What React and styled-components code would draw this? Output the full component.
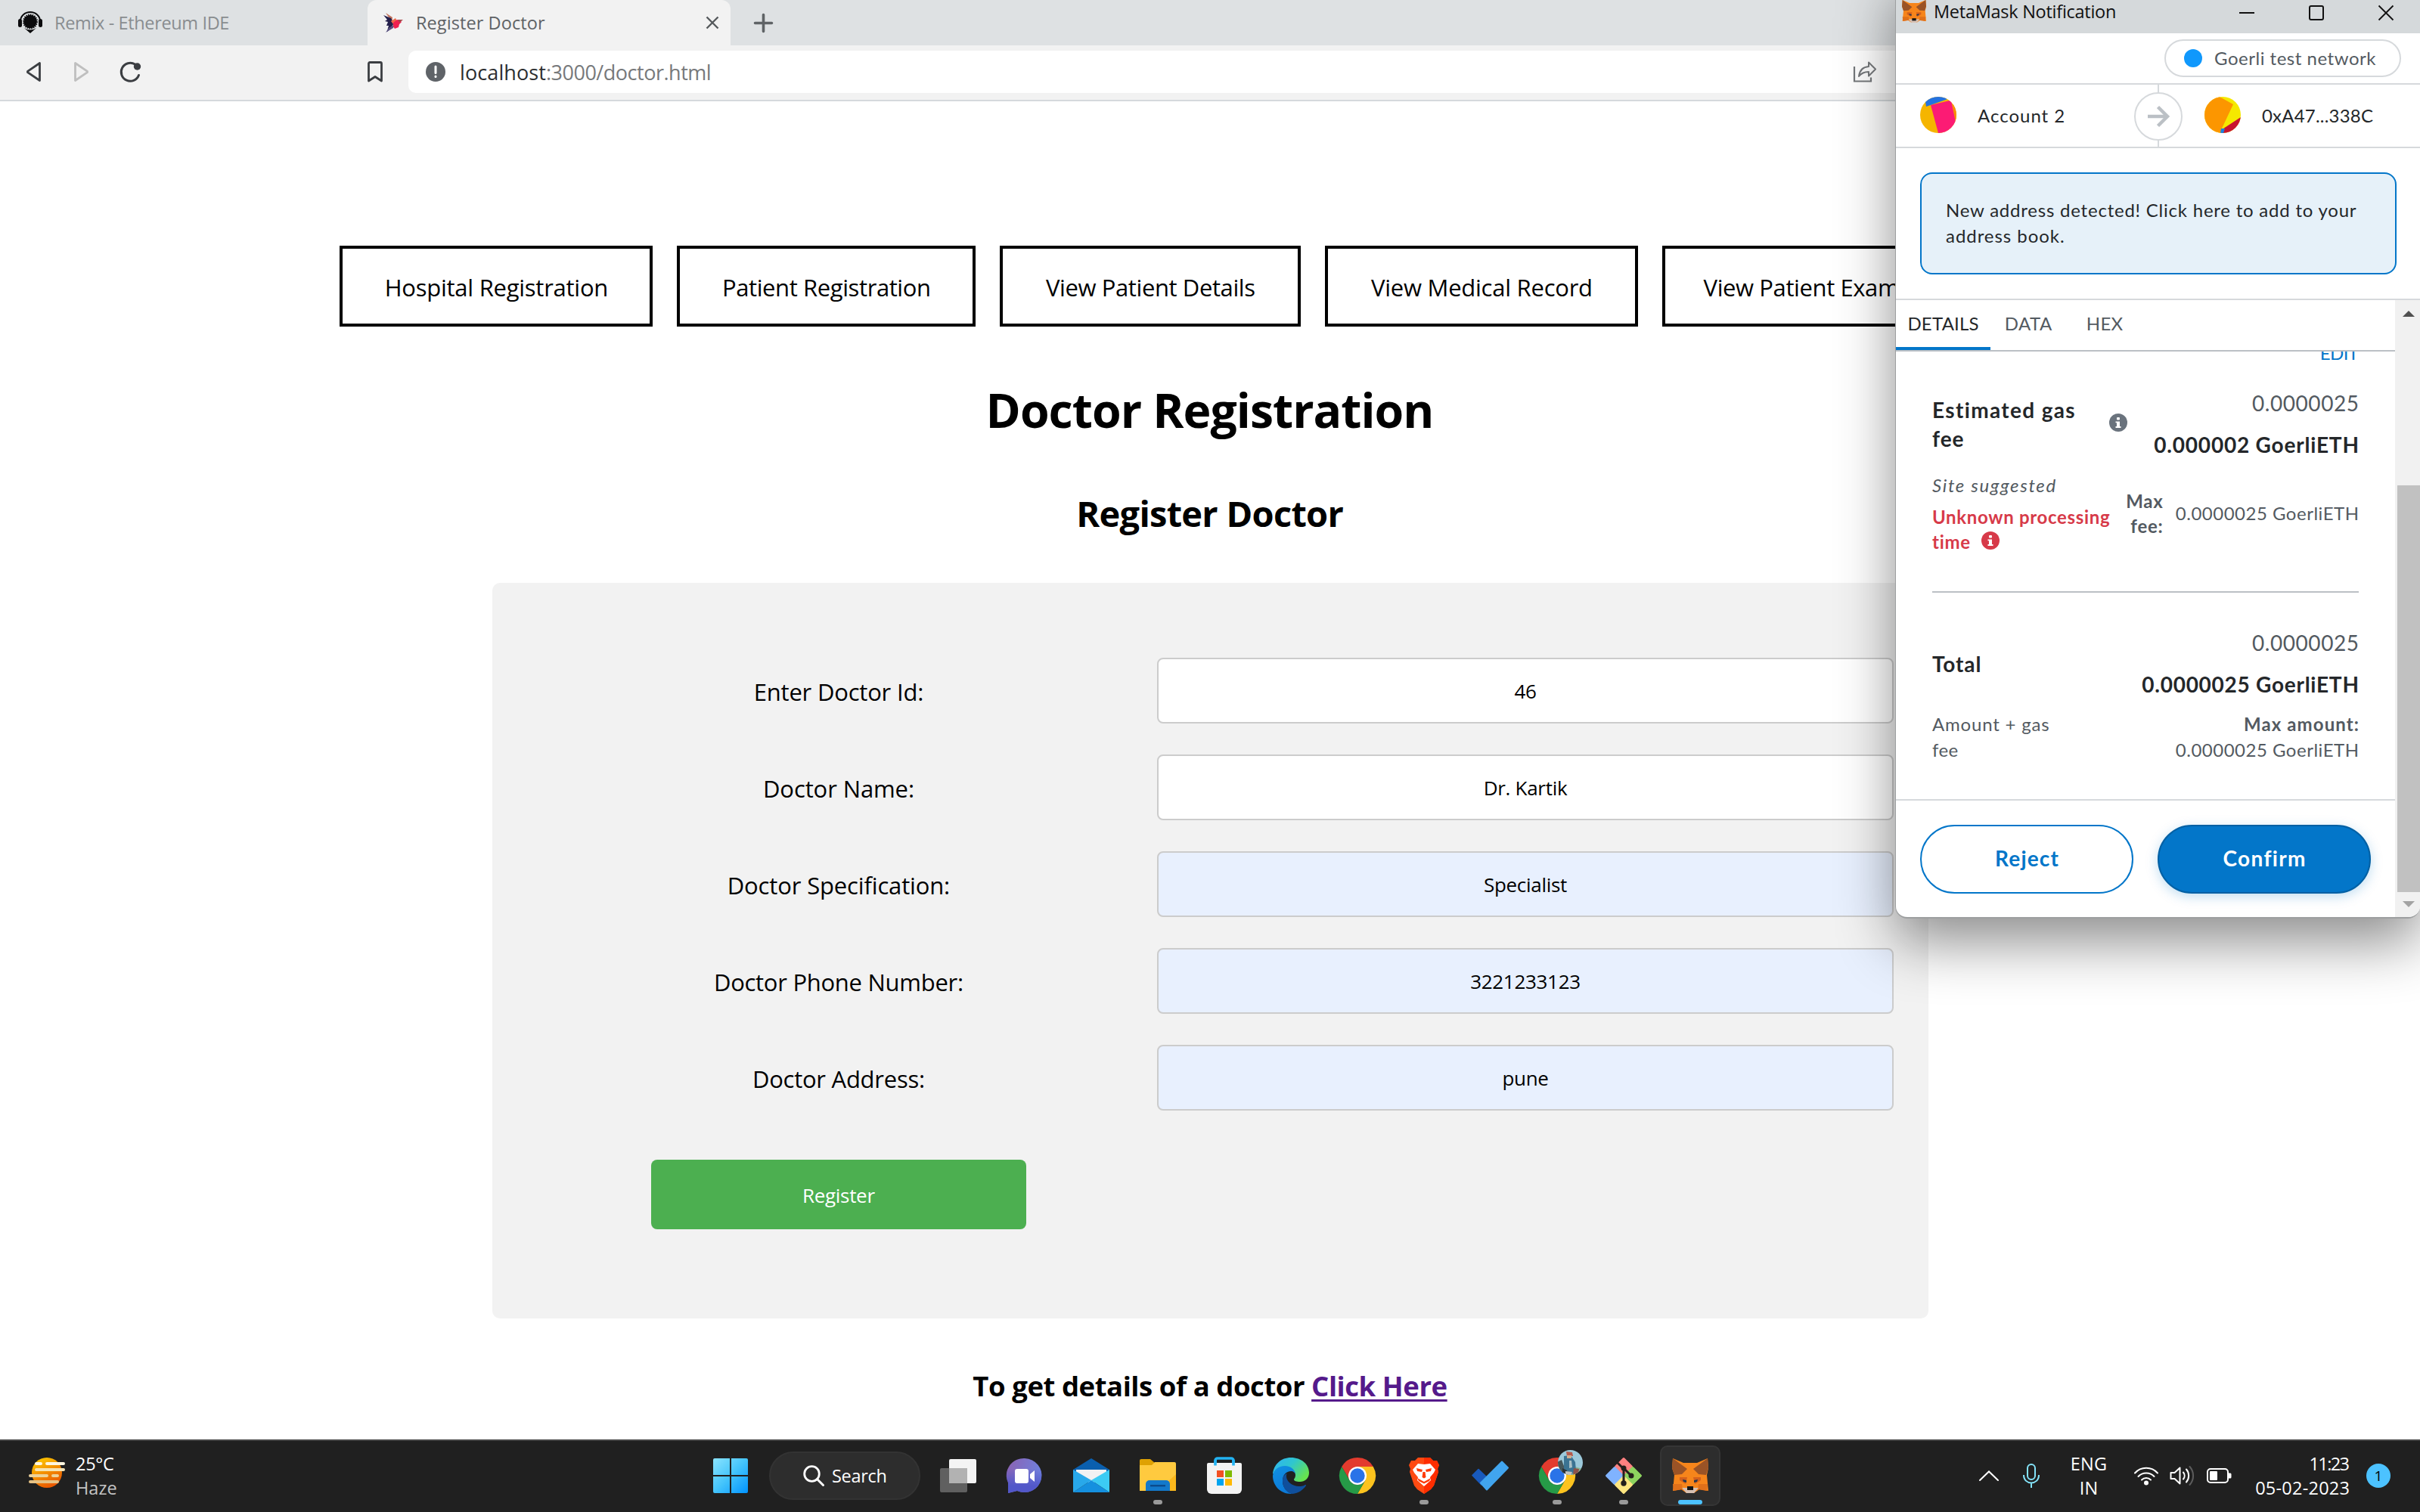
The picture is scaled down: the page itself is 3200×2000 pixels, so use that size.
import React from "react";
import styled, { createGlobalStyle, css } from "styled-components";

const SEGOE = '"Open Sans", "Noto Sans", sans-serif';
const EUCLID = 'Lato, "Open Sans", sans-serif';

const Global = createGlobalStyle`
  *, *::before, *::after { box-sizing: border-box; }
  body { margin: 0; background: #fff; font-family: ${SEGOE}; overflow: hidden; }
  svg { display: block; flex: none; overflow: visible; }
`;

const T = styled.span`
  flex: none;
  white-space: nowrap;
  letter-spacing: ${(p) => p.$ls || 0}px;
  margin-right: ${(p) => -(p.$ls || 0)}px;
  ${(p) => p.$color && css`color: ${p.$color};`}
  ${(p) => p.$ml && css`margin-left: ${p.$ml}px;`}
`;

const Screen = styled.div`
  position: relative;
  width: 3200px;
  height: 2000px;
  overflow: hidden;
  display: flex;
  flex-direction: column;
  background: #fff;
`;

/* ---------- browser chrome ---------- */

const TabStrip = styled.div`
  flex: none;
  height: 60px;
  display: flex;
  align-items: stretch;
  background: #dee1e3;
  font-size: 23.5px;
`;

const Tab = styled.div`
  width: ${(p) => p.$w}px;
  display: flex;
  align-items: center;
  padding: 0 15px 1px ${(p) => p.$pl}px;
  gap: ${(p) => p.$gap}px;
  color: ${(p) => (p.$active ? "#5f6366" : "#898d90")};
  background: ${(p) => (p.$active ? "#f2f2f2" : "transparent")};
  border-radius: 12px 12px 0 0;
`;

const Spacer = styled.div`
  flex: 1;
`;

const NewTab = styled.div`
  display: flex;
  align-items: center;
  padding-left: 31px;
`;

const Toolbar = styled.div`
  flex: none;
  height: 74px;
  display: flex;
  align-items: center;
  padding: 0 0 2px 34px;
  background: #f2f2f2;
  border-bottom: 2px solid #d5d9dc;
`;

const NavIcons = styled.div`
  display: flex;
  align-items: center;
  gap: 41px;
  width: 452px;
`;

const UrlBar = styled.div`
  display: flex;
  align-items: center;
  width: 2300px;
  height: 56px;
  margin-left: 34px;
  padding: 0 0 0 23px;
  border-radius: 10px;
  background: #fff;
  font-size: 27px;
  color: #77797b;
`;

const ShareSlot = styled.div`
  margin-left: 1510px;
`;

/* ---------- web page ---------- */

const Page = styled.main`
  flex: 1;
  display: flex;
  flex-direction: column;
  align-items: center;
  color: #000;
`;

const Nav = styled.nav`
  align-self: flex-start;
  display: flex;
  gap: 32px;
  margin: 191px 0 0 449px;
`;

const NavButton = styled.a`
  flex: none;
  width: ${(p) => p.$w}px;
  height: 107px;
  display: flex;
  align-items: center;
  justify-content: center;
  padding: 2px 0 0 1px;
  border: 4px solid #000;
  background: #fff;
  font-size: 31px;
`;

const Title = styled.h1`
  margin: 70px 0 0;
  font-size: 62.5px;
  line-height: 80px;
  font-weight: 700;
`;

const Subtitle = styled.h2`
  margin: 65px 0 0;
  font-size: 47px;
  line-height: 64px;
  font-weight: 700;
`;

const FormCard = styled.form`
  display: flex;
  flex-direction: column;
  width: 1899px;
  height: 973px;
  margin: 60px 0 0;
  padding: 99px 0 0 37px;
  border-radius: 10px;
  background: #f2f2f2;
`;

const FieldRow = styled.label`
  display: flex;
  align-items: center;
  height: 87px;
  margin-bottom: 41px;
`;

const FieldLabel = styled.div`
  width: 842px;
  padding: 3px 0 0 1px;
  text-align: center;
  font-size: 31px;
`;

const Input = styled.input`
  width: 974px;
  height: 87px;
  padding: 1px 0 0 1px;
  border: 2px solid #ccc;
  border-radius: 8px;
  background: ${(p) => (p.$filled ? "#e8f0fe" : "#fff")};
  text-align: center;
  font: 26px ${SEGOE};
  letter-spacing: -0.3px;
  color: #000;
  outline: none;
`;

const SubmitRow = styled.div`
  display: flex;
  justify-content: center;
  width: 842px;
  margin-top: 24px;
`;

const Submit = styled.button`
  width: 496px;
  height: 92px;
  padding: 1px 0 0 1px;
  border: 0;
  border-radius: 8px;
  background: #4caf50;
  color: #fff;
  font: 26px ${SEGOE};
`;

const FootNote = styled.h3`
  margin: 64px 0 0;
  font-size: 36.5px;
  line-height: 50px;
  letter-spacing: -0.45px;
  font-weight: 700;
`;

const Link = styled.a`
  color: #551a8b;
  text-decoration: underline;
  text-decoration-thickness: 3px;
  text-underline-offset: 4px;
`;

/* ---------- wallet window ---------- */

const Wallet = styled.section`
  position: absolute;
  top: 0;
  right: 0;
  width: 694px;
  height: 1215px;
  display: flex;
  flex-direction: column;
  overflow: hidden;
  border: solid #9d9fa0;
  border-width: 0 0 2px 1px;
  border-radius: 0 0 16px 16px;
  background: #fff;
  font-family: ${EUCLID};
  font-size: 24px;
  color: #24272a;
`;

const WalletShadow = styled.div`
  position: absolute;
  top: -40px;
  right: 0;
  width: 694px;
  height: 1254px;
  border-radius: 16px;
  box-shadow: 0 32px 76px rgba(0, 0, 0, 0.45);
`;

const WalletTitle = styled.header`
  flex: none;
  display: flex;
  align-items: center;
  height: 44px;
  padding: 0 35px 14px 8px;
  background: #d5d9db;
  font-family: ${SEGOE};
  font-size: 23.5px;
  color: #111;
`;

const Controls = styled.div`
  display: flex;
  align-items: center;
  gap: 72px;
  margin-left: auto;
  padding-top: 4px;
`;

const NetworkRow = styled.div`
  flex: none;
  display: flex;
  align-items: center;
  justify-content: flex-end;
  height: 68px;
  padding-right: 25px;
  border-bottom: 2px solid #d6d9dc;
`;

const NetworkPill = styled.div`
  display: flex;
  align-items: center;
  gap: 16px;
  width: 313px;
  height: 50px;
  padding: 0 0 2px 24px;
  border: 2px solid #d6d9dc;
  border-radius: 25px;
  color: #535a61;
`;

const Dot = styled.i`
  width: 24px;
  height: 24px;
  margin-top: 2px;
  border-radius: 50%;
  background: #1098fc;
`;

const AccountRow = styled.div`
  flex: none;
  display: flex;
  align-items: center;
  height: 84px;
  padding-left: 32px;
  border-bottom: 2px solid #d6d9dc;
`;

const Account = styled.div`
  display: flex;
  align-items: center;
  gap: 28px;
  width: ${(p) => p.$w}px;
  padding-bottom: 2px;
`;

const Divider = styled.div`
  display: flex;
  align-items: center;
  justify-content: center;
  width: 64px;
  height: 82px;
  margin-right: 29px;
  background: linear-gradient(#d6d9dc, #d6d9dc) center / 2px 100% no-repeat;
`;

const ArrowCircle = styled.div`
  display: flex;
  align-items: center;
  justify-content: center;
  width: 64px;
  height: 64px;
  margin-top: 2px;
  border: 2px solid #d6d9dc;
  border-radius: 50%;
  background: #fff;
`;

const AlertArea = styled.div`
  flex: none;
  height: 201px;
  padding: 32px 31px 32px 32px;
  border-bottom: 2px solid #d6d9dc;
`;

const Alert = styled.div`
  height: 135px;
  padding: 31px 0 0 32px;
  border: 2px solid #0376c9;
  border-radius: 16px;
  background: #e6f1f9;
  line-height: 34px;
`;

const Body = styled.div`
  flex: 1;
  display: flex;
  min-height: 0;
`;

const BodyMain = styled.div`
  display: flex;
  flex-direction: column;
  width: 660px;
`;

const Tabs = styled.div`
  flex: none;
  display: flex;
  height: 68px;
  border-bottom: 2px solid #bbc0c5;
`;

const WTab = styled.div`
  display: flex;
  align-items: center;
  justify-content: center;
  width: ${(p) => p.$w}px;
  padding-bottom: 2px;
  color: ${(p) => (p.$active ? "#24272a" : "#535a61")};
  border-bottom: 4px solid ${(p) => (p.$active ? "#0376c9" : "transparent")};
`;

const Details = styled.div`
  flex: none;
  height: 592px;
  padding: 0 48px;
  overflow: hidden;
`;

const Edit = styled.div`
  margin-top: -15px;
  text-align: right;
  line-height: 34px;
  color: #0376c9;
`;

const Line = styled.div`
  display: flex;
  align-items: center;
  margin-top: ${(p) => p.$mt}px;
`;

const Heading = styled.div`
  width: 234px;
  font-size: 28px;
  line-height: 38px;
  font-weight: 700;
`;

const InfoSlot = styled.div`
  margin-bottom: ${(p) => p.$mb || 0}px;
  margin-left: ${(p) => p.$ml || 0}px;
`;

const Amounts = styled.div`
  display: flex;
  flex-direction: column;
  align-items: flex-end;
  gap: 17px;
  margin-left: auto;
  font-size: 28px;
  line-height: 38px;
  color: #535a61;
`;

const Strong = styled.div`
  font-weight: 700;
  color: ${(p) => p.$color || "#24272a"};
`;

const Small = styled.div`
  display: flex;
  flex-direction: column;
  align-items: ${(p) => (p.$right ? "flex-end" : "flex-start")};
  margin-left: ${(p) => p.$ml || "0"};
  line-height: ${(p) => p.$lh || 34}px;
  color: #535a61;
`;

const Site = styled.div`
  margin-bottom: 9px;
  font-style: italic;
`;

const Warning = styled.div`
  display: flex;
  align-items: center;
  height: 33px;
  font-weight: 700;
  color: #d73a49;
`;

const Rule = styled.div`
  height: 2px;
  margin-top: 49px;
  background: #bbc0c5;
`;

const Actions = styled.footer`
  flex: none;
  display: flex;
  gap: 32px;
  height: 156px;
  padding: 32px;
  border-top: 2px solid #d6d9dc;
`;

const Action = styled.button`
  width: 282px;
  height: 91px;
  padding: 0 0 4px;
  border: 2px solid ${(p) => (p.$primary ? "#0260a4" : "#0376c9")};
  border-radius: 46px;
  background: ${(p) => (p.$primary ? "#0376c9" : "#fff")};
  color: ${(p) => (p.$primary ? "#fff" : "#0376c9")};
  font: 700 28px ${EUCLID};
  ${(p) => p.$primary && css`box-shadow: 0 4px 16px rgba(3, 118, 201, 0.25);`}
`;

const Scrollbar = styled.div`
  display: flex;
  flex-direction: column;
  align-items: center;
  width: 33px;
  padding: 14px 0 12px 2px;
  background: #f1f1f1;
`;

const Thumb = styled.div`
  width: 30px;
  height: 538px;
  margin: 223px 0 12px;
  background: #c1c1c1;
`;

/* ---------- taskbar ---------- */

const Taskbar = styled.footer`
  flex: none;
  display: flex;
  align-items: center;
  height: 96px;
  border-top: 2px solid #454545;
  background: #202020;
  color: #fff;
  font-size: 23.5px;
  line-height: 32px;
`;

const Weather = styled.div`
  display: flex;
  align-items: center;
  gap: 14px;
  width: 922px;
  padding-left: 38px;
`;

const WeatherIconSlot = styled.div`
  margin-bottom: 9px;
`;

const Stack = styled.div`
  flex: none;
  display: flex;
  flex-direction: column;
  align-items: ${(p) => p.$align || "flex-start"};
  width: ${(p) => p.$w || "auto"};
  margin-left: ${(p) => p.$ml || 0}px;
  padding-bottom: 3px;
`;

const Slot = styled.div`
  flex: none;
  position: relative;
  display: flex;
  align-items: center;
  justify-content: center;
  width: 80px;
  height: 80px;
  margin: 0 4px 2px;
  border: 2px solid ${(p) => (p.$active ? "#353535" : "transparent")};
  border-radius: 10px;
  background: ${(p) => (p.$active ? "#2d2d2d" : "transparent")};
`;

const Running = styled.i`
  position: absolute;
  left: 50%;
  bottom: 0;
  width: ${(p) => (p.$active ? 32 : 12)}px;
  height: 6px;
  border-radius: 3px;
  background: ${(p) => (p.$active ? "#4cc2ff" : "#9a9a9a")};
  transform: translateX(-50%);
`;

const SearchPill = styled.div`
  flex: none;
  display: flex;
  align-items: center;
  gap: 10px;
  width: 200px;
  height: 64px;
  margin: 0 6px 2px 7px;
  padding-left: 43px;
  border: 2px solid #333;
  border-radius: 32px;
  background: #2d2d2d;
`;

const Tray = styled.div`
  flex: none;
  display: flex;
  align-items: center;
  margin-left: 338px;
`;

const TrayItem = styled.div`
  flex: none;
  margin-left: ${(p) => p.$ml}px;
  margin-bottom: 2px;
`;

const Badge = styled.div`
  flex: none;
  display: flex;
  align-items: center;
  justify-content: center;
  width: 32px;
  height: 32px;
  margin: 0 0 2px 22px;
  border-radius: 50%;
  background: #4cc2ff;
  color: #000;
  font-size: 19px;
`;

/* ---------- drawings ---------- */

const FoxIcon = ({ w = 48, h = 46 }) => (
  <svg width={w} height={h} viewBox="0 0 48 46" preserveAspectRatio="none">
    <path d="M1 0 15 6H33L47 0l1 13-2 9 2 21-12-2-7 5H19l-7-5-11 2L3 22 0 13z" fill="#f6851b" />
    <path d="M1 0 20 14 13 21 3 22 0 13z" fill="#9a5326" />
    <path d="M47 0 28 14l7 7 10 1 3-9z" fill="#9a5326" />
    <path d="M1 34h12l1 7-12 2z" fill="#e0701a" />
    <path d="M47 34H35l-1 7 12 2z" fill="#e0701a" />
    <path d="M10 25h10l-2 9-8-5z" fill="#d4601c" />
    <path d="M38 25H28l2 9 8-5z" fill="#d4601c" />
    <path d="M14 28l5 1 0 3-4-1z" fill="#24364f" />
    <path d="M34 28l-5 1 0 3 4-1z" fill="#24364f" />
    <path d="M13 39h22l-6 7H19z" fill="#d6c0b3" />
    <path d="M20 37h8v5h-8z" fill="#161616" />
  </svg>
);

const RemixIcon = () => (
  <svg width="34" height="30" viewBox="0 0 34 30">
    <path d="M4 13a13 12 0 0 1 26 0" fill="none" stroke="#0b0b0d" strokeWidth="2" />
    <rect x="1" y="10" width="5" height="11" rx="2.5" fill="#0b0b0d" />
    <rect x="28" y="10" width="5" height="11" rx="2.5" fill="#0b0b0d" />
    <circle cx="17" cy="13.500" r="8.700" fill="#0b0b0d" />
    <circle cx="17" cy="13.500" r="9" fill="none" stroke="#0b0b0d" strokeWidth="2" strokeDasharray="1.6 1.2" />
    <path d="M9 22q8 5 16 0l-8 7z" fill="#0b0b0d" />
  </svg>
);

const BirdIcon = () => (
  <svg width="26" height="26" viewBox="0 0 26 26">
    <path d="M3 0 12 6l-1 6z" fill="#c2735d" />
    <path d="M0 3l10 4 4 7-6 8-3 3 1-5 1-3-3 0 2-5-4-1 3-2z" fill="#241f4b" />
    <path d="M3 26 13 20l2-5-8 5z" fill="#58507f" />
    <path d="M10 11l6-4 2 4-5 4z" fill="#ef6b4a" />
    <path d="M13 13l5-4 4 1 2 2-3 3-1 4-5 2-2-3z" fill="#ee2050" />
    <path d="M19 9l7 0-5 4z" fill="#a7484a" />
  </svg>
);

const Info = ({ size = 24, color }) => (
  <svg width={size} height={size} viewBox="0 0 24 24">
    <circle cx="12" cy="12" r="12" fill={color} />
    <rect x="10" y="5" width="4" height="3.600" rx="1" fill="#fff" />
    <path d="M8.500 10.400H14V17h1.500v2h-7v-2H10v-4.800H8.500z" fill="#fff" />
  </svg>
);

const Jazz1 = () => (
  <svg width="48" height="48" viewBox="0 0 48 48">
    <clipPath id="j1"><circle cx="24" cy="24" r="24" /></clipPath>
    <g clipPath="url(#j1)">
      <rect width="48" height="48" fill="#f5b500" />
      <path d="M30 0h18v40l-6-35z" fill="#f98c00" />
      <path d="M14 11 41 4.500 50 48H24z" fill="#fc1b74" />
      <path d="M6 0h34l-5 3.500L8 13z" fill="#2472e0" />
    </g>
  </svg>
);

const Jazz2 = () => (
  <svg width="48" height="48" viewBox="0 0 48 48">
    <clipPath id="j2"><circle cx="24" cy="24" r="24" /></clipPath>
    <g clipPath="url(#j2)">
      <rect width="48" height="48" fill="#f5e900" />
      <path d="M0 0h20l18 10-16 34v4H0z" fill="#fc9600" />
      <path d="M48 27v21H24l1-6z" fill="#c8142f" />
      <path d="M22 42h5l-2 6h-4z" fill="#1a7fe0" />
    </g>
  </svg>
);

const Weather25 = () => (
  <svg width="48" height="41" viewBox="0 0 48 41">
    <defs>
      <linearGradient id="sun" x1="0" y1="0" x2="0.500" y2="1">
        <stop offset="0" stopColor="#ffd400" /><stop offset="1" stopColor="#ea5a00" />
      </linearGradient>
    </defs>
    <circle cx="24" cy="20" r="20" fill="url(#sun)" />
    <g strokeWidth="4" strokeLinecap="round">
      <path d="M10 8h6M24 8h22" stroke="#fdf6e0" />
      <path d="M10 16h36" stroke="#f6e4b4" />
      <path d="M2 24h22M32 24h6" stroke="#ecd29a" />
      <path d="M2 32h36" stroke="#e6c285" />
    </g>
  </svg>
);

const WindowsIcon = () => (
  <svg width="46" height="46" viewBox="0 0 46 46">
    <defs>
      <linearGradient id="win" x1="0" y1="0" x2="1" y2="1">
        <stop offset="0" stopColor="#8be4ff" /><stop offset="0.500" stopColor="#44c4fb" /><stop offset="1" stopColor="#0093ff" />
      </linearGradient>
    </defs>
    <path fill="url(#win)" d="M2 0h20v22H0V2a2 2 0 0 1 2-2zM24 0h20a2 2 0 0 1 2 2v20H24zM0 24h22v22H2a2 2 0 0 1-2-2zM24 24h22v20a2 2 0 0 1-2 2H24z" />
  </svg>
);

const TaskViewIcon = () => (
  <svg width="48" height="46" viewBox="0 0 48 46">
    <rect x="12" y="1" width="36" height="32" rx="2" fill="#f4f4f4" />
    <rect x="0" y="13" width="36" height="32" rx="2" fill="#606060" />
    <rect x="12" y="13" width="24" height="20" fill="#b2b2b2" />
  </svg>
);

const ChatIcon = () => (
  <svg width="46" height="46" viewBox="0 0 46 46">
    <defs>
      <linearGradient id="chat" x1="0" y1="0.300" x2="1" y2="0.600">
        <stop offset="0" stopColor="#8a63b4" /><stop offset="1" stopColor="#6d84e2" />
      </linearGradient>
      <linearGradient id="chat2" x1="0" y1="0" x2="0" y2="1">
        <stop offset="0.300" stopColor="#5257c9" stopOpacity="0" /><stop offset="0.800" stopColor="#5257c9" />
      </linearGradient>
    </defs>
    <path d="M23 0a23 22.500 0 1 1-10 43L1 46V32A23 22.500 0 0 1 23 0z" fill="url(#chat)" />
    <path d="M23 0a23 22.500 0 1 1-10 43L1 46V32A23 22.500 0 0 1 23 0z" fill="url(#chat2)" />
    <rect x="10" y="14" width="18" height="19" rx="3" fill="#fff" />
    <path d="M30 21l6-5v15l-6-5z" fill="#fff" />
  </svg>
);

const MailIcon = () => (
  <svg width="48" height="46" viewBox="0 0 48 46">
    <path d="M0 15 24 0l24 15v8H0z" fill="#0a5fae" />
    <path d="M4 15h40v8L24 34 4 23z" fill="#f1f1f3" />
    <path d="M48 15v30L24 29z" fill="#3ccbf4" />
    <path d="M0 45 24 29l24 16z" fill="#1590df" />
    <path d="M0 15 24 29 0 45z" fill="#28a8ea" />
  </svg>
);

const FolderIcon = () => (
  <svg width="48" height="44" viewBox="0 0 48 44">
    <path d="M0 2a2 2 0 0 1 2-2h12l6 5v6H0z" fill="#dfa103" />
    <path d="M0 8h16l4-4h26a2 2 0 0 1 2 2v36H0z" fill="#ffca3f" />
    <path d="M48 20v22H24z" fill="#fbb81c" />
    <path d="M8 42V33a5 5 0 0 1 5-5h22a5 5 0 0 1 5 5v9z" fill="#1379cb" />
    <rect x="14" y="34" width="20" height="2.400" fill="#0b4b8c" />
  </svg>
);

const StoreIcon = () => (
  <svg width="46" height="48" viewBox="0 0 46 48">
    <path d="M11 11V4a3 3 0 0 1 3-3h18a3 3 0 0 1 3 3v7" fill="none" stroke="#22b3f3" strokeWidth="3.600" />
    <path d="M0 9a2 2 0 0 1 2-2h42a2 2 0 0 1 2 2v33a6 6 0 0 1-6 6H6a6 6 0 0 1-6-6z" fill="#f3f3f3" />
    <path d="M11 10.500V3M35 10.500V3" stroke="#22b3f3" strokeWidth="3.600" />
    <path d="M13 17h9v9h-9z" fill="#f25022" />
    <path d="M24 17h9v9h-9z" fill="#7fba00" />
    <path d="M13 28h9v9h-9z" fill="#00a4ef" />
    <path d="M24 28h9v9h-9z" fill="#ffb900" />
  </svg>
);

const EdgeIcon = () => (
  <svg width="48" height="48" viewBox="0 0 48 48">
    <defs>
      <linearGradient id="e1" x1="0" y1="0" x2="1" y2="0.600">
        <stop offset="0" stopColor="#2fb1f5" /><stop offset="0.500" stopColor="#2fc6cf" /><stop offset="1" stopColor="#66e34f" />
      </linearGradient>
      <linearGradient id="e2" x1="0" y1="0" x2="0.500" y2="1">
        <stop offset="0" stopColor="#1191e3" /><stop offset="1" stopColor="#0b79d8" />
      </linearGradient>
    </defs>
    <path d="M0 22C1 9 11 0 24 0c14 0 24 9 24 20 0 8-6 12-12 12-5 0-8-1-8-3 0-1 2-2 2-6 0-6-6-9-13-9C9 14 3 18 0 22z" fill="url(#e1)" />
    <path d="M0 24C1 16 8 11 16 11c8 0 14 5 14 12 0-3-3-5-6-5-6 0-11 5-11 13 0 9 6 15 13 17h-2C10 48 0 37 0 24z" fill="url(#e2)" />
    <path d="M19 21c-5 2-6 6-6 10 0 9 6 16 13 17 8-1 14-5 18-11 0-1 0-1-1-1-3 2-6 2-8 2-10 0-17-7-17-13 0-2 0-3 1-4z" fill="#0f4f9c" />
  </svg>
);

const ChromeIcon = () => (
  <svg width="48" height="48" viewBox="0 0 48 48">
    <path d="M24 24 3.200 12A24 24 0 0 1 44.800 12z" fill="#e33b2e" />
    <path d="M24 12H44.800A24 24 0 0 1 24 48L34.400 30z" fill="#fcc31e" />
    <path d="M3.200 12 13.600 30 24 24V12z" fill="#e33b2e" />
    <path d="M3.200 12 13.600 30A12 12 0 0 0 34.400 30L24 48A24 24 0 0 1 3.200 12z" fill="#269a47" />
    <circle cx="24" cy="24" r="12" fill="#fff" />
    <circle cx="24" cy="24" r="9.700" fill="#2a73e8" />
  </svg>
);

const ChromeProfileIcon = () => (
  <svg width="48" height="48" viewBox="0 0 48 48">
    <ChromeIcon />
    <clipPath id="av"><circle cx="41.500" cy="6.500" r="16.500" /></clipPath>
    <g clipPath="url(#av)">
      <rect x="24" y="-11" width="36" height="36" fill="#9cc9da" />
      <path d="M24 14l12-5 22 6v12H24z" fill="#86b394" />
      <path d="M24 6l6-3 4 11-3 10h-7z" fill="#46575a" />
      <path d="M33-2l9-1 6 9 1 12-8 5-8-5z" fill="#3b7392" />
      <path d="M36-8l8 1 1 5-8 0z" fill="#b55a4c" />
      <path d="M37-3h6v4h-6z" fill="#cfae92" />
      <path d="M40 4l3 0 1 9-4 1z" fill="#a9bfc4" />
      <path d="M46 14l7 1-1 6-7 2z" fill="#8d5248" />
      <path d="M31 14l6 3 1 7-7-1z" fill="#2c3338" />
      <path d="M35 18l9 1-2 5h-7z" fill="#c2c4bf" />
    </g>
  </svg>
);

const BraveIcon = () => (
  <svg width="40" height="48" viewBox="0 0 40 48">
    <path d="M12 0h16l4 4 5 0 3 6-2 5 1 4-6 18-4 5-9 6-9-6-4-5L1 19l1-4-2-5 3-6h5z" fill="#ff4a12" />
    <path d="M20 0h8l4 4 5 0 3 6-2 5 1 4-6 18-4 5-9 6z" fill="#ff2d00" />
    <path d="M12 8l8 1 8-1 7 8-2 4-5 6 1 4-9 8-9-8 1-4-5-6-2-4z" fill="#fff" />
    <path d="M10 14l8 2-1 3-6-1zM30 14l-8 2 1 3 6-1z" fill="#ff3a08" />
    <path d="M18.500 19l-1 7 2.500 1.500 2.500-1.500-1-7z" fill="#ff3a08" />
    <path d="M11 27l9 5 9-5-2 4-7 3.500-7-3.500z" fill="#ff3a08" />
  </svg>
);

const TodoIcon = () => (
  <svg width="48" height="40" viewBox="0 0 48 40">
    <path d="M0 19.500 8 11.500 20 23l-8 9z" fill="#195abd" stroke="#195abd" strokeWidth="1.500" strokeLinejoin="round" />
    <path d="M11 29.500 39 1.500l8 8L19 38.500z" fill="#41a5ee" stroke="#41a5ee" strokeWidth="2" strokeLinejoin="round" />
  </svg>
);

const GitIcon = () => (
  <svg width="48" height="48" viewBox="0 0 48 48">
    <g strokeWidth="3" strokeLinejoin="round">
      <path d="M24 1.500 34.500 12 24 22.500 13.500 12z" fill="#ff8080" stroke="#ff8080" />
      <path d="M12 13.500 22.500 24 12 34.500 1.500 24z" fill="#80b3ff" stroke="#80b3ff" />
      <path d="M36 13.500 46.500 24 36 34.500 25.500 24z" fill="#8dd35f" stroke="#8dd35f" />
      <path d="M24 25.500 34.500 36 24 46.500 13.500 36z" fill="#ffe680" stroke="#ffe680" />
    </g>
    <path d="M24.500 11 11.500 24M23.500 11 36.500 24M11.500 24l13 13M36.500 24l-13 13" stroke="#202020" strokeWidth="0" fill="none" />
    <path d="M11 13 23.500 25.500M37 13 24.500 25.500" stroke="#202020" strokeWidth="0" fill="none" />
    <path d="M15 6 24 15V34M24 14 34 24" stroke="#241f1c" strokeWidth="3" fill="none" />
    <circle cx="24" cy="14" r="3.500" fill="#241f1c" />
    <circle cx="34" cy="24" r="3.500" fill="#241f1c" />
    <circle cx="24" cy="34" r="3.700" fill="#241f1c" />
  </svg>
);

const apps = [
  { icon: <TaskViewIcon /> },
  { icon: <ChatIcon /> },
  { icon: <MailIcon /> },
  { icon: <FolderIcon />, running: true },
  { icon: <StoreIcon /> },
  { icon: <EdgeIcon /> },
  { icon: <ChromeIcon /> },
  { icon: <BraveIcon />, running: true },
  { icon: <TodoIcon /> },
  { icon: <ChromeProfileIcon />, running: true },
  { icon: <GitIcon />, running: true },
  { icon: <FoxIcon />, running: true, active: true },
];

const navItems = [
  ["Hospital Registration", 414, -0.25],
  ["Patient Registration", 395, -0.4],
  ["View Patient Details", 398, -0.4],
  ["View Medical Record", 414, -0.24],
  ["View Patient Examination", 465, -0.4],
];

const fields = [
  ["Enter Doctor Id:", "46", false, -0.2],
  ["Doctor Name:", "Dr. Kartik", false, -0.1],
  ["Doctor Specification:", "Specialist", true, -0.15],
  ["Doctor Phone Number:", "3221233123", true, -0.28],
  ["Doctor Address:", "pune", true, -0.25],
];

export default function App() {
  return (
    <Screen>
      <Global />
      <TabStrip>
        <Tab $w={486} $pl={23} $gap={15}>
          <RemixIcon />
          <T $ls={-0.36}>Remix - Ethereum IDE</T>
        </Tab>
        <Tab $w={480} $pl={21} $gap={17} $active>
          <BirdIcon />
          <T $ls={0.08}>Register Doctor</T>
          <Spacer />
          <svg width="18" height="18" viewBox="0 0 18 18">
            <path d="M1.500 1.500l15 15M16.500 1.500l-15 15" stroke="#55595c" strokeWidth="2.400" />
          </svg>
        </Tab>
        <NewTab>
          <svg width="25" height="25" viewBox="0 0 25 25">
            <path d="M12.500 1.500v22M1.500 12.500h22" stroke="#5f6366" strokeWidth="3.600" strokeLinecap="round" />
          </svg>
        </NewTab>
      </TabStrip>
      <Toolbar>
        <NavIcons>
          <svg width="22" height="28" viewBox="0 0 22 28">
            <path d="M18.500 2.500v23L2.500 14.700v-1.400z" fill="none" stroke="#3b3e42" strokeWidth="2.800" strokeLinejoin="round" />
          </svg>
          <svg width="22" height="28" viewBox="0 0 22 28">
            <path d="M2.500 2.500v23l16-10.800v-1.400z" fill="none" stroke="#bfbfbf" strokeWidth="2.800" strokeLinejoin="round" />
          </svg>
          <svg width="28" height="28" viewBox="1 0 28 28">
            <path d="M19.500 4A12 12 0 1 0 24.500 18.500" fill="none" stroke="#3b3e42" strokeWidth="3" strokeLinecap="round" />
            <circle cx="22.500" cy="7" r="4.700" fill="#3b3e42" />
          </svg>
          <Spacer />
        </NavIcons>
        <svg width="20" height="28" viewBox="0 0 20 28">
          <path d="M3 1.500h14a1.500 1.500 0 0 1 1.500 1.500v23L10 20.500 1.500 26V3A1.500 1.500 0 0 1 3 1.500z" fill="none" stroke="#3b3e42" strokeWidth="2.800" strokeLinejoin="round" />
        </svg>
        <UrlBar>
          <svg width="26" height="26" viewBox="0 0 26 26">
            <circle cx="13" cy="13" r="13" fill="#5f6368" />
            <path d="M13 6v8.500M13 19v.6" stroke="#fff" strokeWidth="3" strokeLinecap="round" />
          </svg>
          <T $ls={0.1} $ml={19} $color="#2c2e30">localhost</T>
          <T $ls={-0.48}>:3000/doctor.html</T>
          <ShareSlot>
            <svg width="31" height="28" viewBox="0 0 31 28">
              <path d="M1 7v19.500h22v-5" fill="none" stroke="#75787b" strokeWidth="2.200" />
              <path d="M20 1.500 29 10.500 20 19.500v-5.500c-6 0-10 2-13 6C8 12 12 7.500 20 7z" fill="none" stroke="#75787b" strokeWidth="2" strokeLinejoin="round" />
            </svg>
          </ShareSlot>
        </UrlBar>
      </Toolbar>

      <Page>
        <Nav>
          {navItems.map(([label, w, ls]) => (
            <NavButton key={label} $w={w}><T $ls={ls}>{label}</T></NavButton>
          ))}
        </Nav>
        <Title><T $ls={-0.98}>Doctor Registration</T></Title>
        <Subtitle><T $ls={-0.72}>Register Doctor</T></Subtitle>
        <FormCard>
          {fields.map(([label, value, filled, ls]) => (
            <FieldRow key={label}>
              <FieldLabel><T $ls={ls}>{label}</T></FieldLabel>
              <Input defaultValue={value} $filled={filled} />
            </FieldRow>
          ))}
          <SubmitRow><Submit type="button"><T $ls={-0.3}>Register</T></Submit></SubmitRow>
        </FormCard>
        <FootNote>To get details of a doctor <Link>Click Here</Link></FootNote>
      </Page>

      <Taskbar>
        <Weather>
          <WeatherIconSlot><Weather25 /></WeatherIconSlot>
          <Stack>
            <T $ls={-0.31}>25°C</T>
            <T $ls={0} $color="#c4c4c4">Haze</T>
          </Stack>
        </Weather>
        <Slot><WindowsIcon /></Slot>
        <SearchPill>
          <svg width="28" height="28" viewBox="0 0 28 28">
            <circle cx="11.500" cy="11.500" r="9.800" fill="none" stroke="#fff" strokeWidth="2.800" />
            <path d="M18.500 18.500 26.500 26.500" stroke="#fff" strokeWidth="3" strokeLinecap="round" />
          </svg>
          <T $ls={-0.3}>Search</T>
        </SearchPill>
        {apps.map((a, i) => (
          <Slot key={i} $active={a.active}>
            {a.icon}
            {a.running && <Running $active={a.active} />}
          </Slot>
        ))}
        <Tray>
          <TrayItem $ml={0}>
            <svg width="26" height="14" viewBox="0 0 26 14">
              <path d="M1 13 13 1.500 25 13" fill="none" stroke="#fff" strokeWidth="2" strokeLinecap="round" />
            </svg>
          </TrayItem>
          <TrayItem $ml={32}>
            <svg width="22" height="32" viewBox="0 0 22 32">
              <rect x="6" y="1" width="10" height="20" rx="5" fill="none" stroke="#84e4fa" strokeWidth="2" />
              <path d="M1 15c0 14 20 14 20 0M11 26v6" fill="none" stroke="#84e4fa" strokeWidth="2" />
            </svg>
          </TrayItem>
          <Stack $align="center" $w="50px" $ml={40}>
            <T $ls={0.3}>ENG</T>
            <T>IN</T>
          </Stack>
          <TrayItem $ml={35}>
            <svg width="32" height="26" viewBox="0 0 32 26">
              <g fill="none" stroke="#fff" strokeWidth="2" strokeLinecap="round">
                <path d="M1 9.500a20 20 0 0 1 30 0" />
                <path d="M5.500 14a14.500 14.500 0 0 1 21 0" />
                <path d="M10 18.500a8.500 8.500 0 0 1 12 0" />
              </g>
              <circle cx="16" cy="22.500" r="3" fill="#fff" />
            </svg>
          </TrayItem>
          <TrayItem $ml={15}>
            <svg width="34" height="28" viewBox="0 0 34 28">
              <path d="M1.500 10h5l7-6.500v21l-7-6.500h-5z" fill="none" stroke="#fff" strokeWidth="2" strokeLinejoin="round" />
              <g fill="none" strokeWidth="2" strokeLinecap="round">
                <path d="M18 9.500a7 7 0 0 1 0 9M22 5.500a13 13 0 0 1 0 17" stroke="#fff" />
                <path d="M26.500 2a18 18 0 0 1 0 24" stroke="#5c5c5c" />
              </g>
            </svg>
          </TrayItem>
          <TrayItem $ml={15}>
            <svg width="33" height="20" viewBox="0 0 33 20">
              <rect x="1" y="1" width="27" height="18" rx="4" fill="none" stroke="#fff" strokeWidth="2" />
              <rect x="4" y="4" width="10" height="12" rx="1" fill="#fff" />
              <path d="M29 6.500h2a1.500 1.500 0 0 1 1.500 1.500v4a1.500 1.500 0 0 1-1.500 1.500h-2z" fill="#fff" />
            </svg>
          </TrayItem>
          <Stack $align="flex-end" $w="126px" $ml={30}>
            <T $ls={-1.6}>11:23</T>
            <T $ls={0.25}>05-02-2023</T>
          </Stack>
          <Badge>1</Badge>
        </Tray>
      </Taskbar>

      <WalletShadow />
      <Wallet>
        <WalletTitle>
          <FoxIcon w={32} h={30} />
          <T $ls={-0.27} $ml={10}>MetaMask Notification</T>
          <Controls>
            <svg width="20" height="20" viewBox="0 0 20 20"><path d="M0 10h20" stroke="#111" strokeWidth="2" /></svg>
            <svg width="20" height="20" viewBox="0 0 20 20"><rect x="1" y="1" width="18" height="18" rx="2" fill="none" stroke="#111" strokeWidth="2" /></svg>
            <svg width="20" height="20" viewBox="0 0 20 20"><path d="M.500.500l19 19M19.500.500l-19 19" stroke="#111" strokeWidth="1.800" /></svg>
          </Controls>
        </WalletTitle>
        <NetworkRow>
          <NetworkPill><Dot /><T $ls={0.52}>Goerli test network</T></NetworkPill>
        </NetworkRow>
        <AccountRow>
          <Account $w={283}><Jazz1 /><T $ls={1}>Account 2</T></Account>
          <Divider>
            <ArrowCircle>
              <svg width="30" height="30" viewBox="0 0 30 30">
                <path d="M1 15h24" stroke="#bbc0c5" strokeWidth="4.500" />
                <path d="M14.500 2.500 27 15 14.500 27.500" fill="none" stroke="#bbc0c5" strokeWidth="4.500" />
              </svg>
            </ArrowCircle>
          </Divider>
          <Account $w={260}><Jazz2 /><T $ls={0.2}>0xA47...338C</T></Account>
        </AccountRow>
        <AlertArea>
          <Alert>
            <T $ls={0.78}>New address detected! Click here to add to your</T>
            <br />
            <T $ls={0.95}>address book.</T>
          </Alert>
        </AlertArea>
        <Body>
          <BodyMain>
            <Tabs>
              <WTab $w={125} $active><T $ls={0.2}>DETAILS</T></WTab>
              <WTab $w={100}><T $ls={0.4}>DATA</T></WTab>
              <WTab $w={102}><T $ls={0.3}>HEX</T></WTab>
            </Tabs>
            <Details>
              <Edit><T $ls={-0.6}>EDIT</T></Edit>
              <Line $mt={30}>
                <Heading><T $ls={1.35}>Estimated gas</T><br /><T $ls={1}>fee</T></Heading>
                <InfoSlot $mb={3}><Info color="#6a737d" /></InfoSlot>
                <Amounts>
                  <T $ls={0.56}>0.0000025</T>
                  <Strong><T $ls={0.8}>0.000002 GoerliETH</T></Strong>
                </Amounts>
              </Line>
              <Line $mt={18}>
                <Small $lh={33}>
                  <Site><T $ls={1.65}>Site suggested</T></Site>
                  <Warning><T $ls={0.68}>Unknown processing</T></Warning>
                  <Warning><T $ls={0.75}>time</T><InfoSlot $ml={15} $mb={4}><Info color="#d73a49" /></InfoSlot></Warning>
                </Small>
                <Small $right $ml="auto" $lh={33}>
                  <Strong $color="#535a61"><T $ls={0.8}>Max</T></Strong>
                  <Strong $color="#535a61"><T $ls={0.8}>fee:</T></Strong>
                </Small>
                <Small $ml="17px"><T $ls={0.5}>0.0000025 GoerliETH</T></Small>
              </Line>
              <Rule />
              <Line $mt={47}>
                <Heading><T $ls={0.9}>Total</T></Heading>
                <Amounts>
                  <T $ls={0.56}>0.0000025</T>
                  <Strong><T $ls={0.74}>0.0000025 GoerliETH</T></Strong>
                </Amounts>
              </Line>
              <Line $mt={17}>
                <Small><T $ls={0.8}>Amount + gas</T><T $ls={0.4}>fee</T></Small>
                <Small $right $ml="auto">
                  <Strong $color="#535a61"><T $ls={1.1}>Max amount:</T></Strong>
                  <T $ls={0.5}>0.0000025 GoerliETH</T>
                </Small>
              </Line>
            </Details>
            <Actions>
              <Action><T $ls={1.2}>Reject</T></Action>
              <Action $primary><T $ls={1.35}>Confirm</T></Action>
            </Actions>
          </BodyMain>
          <Scrollbar>
            <svg width="16" height="8" viewBox="0 0 16 8"><path d="M0 8 8 0l8 8z" fill="#505050" /></svg>
            <Thumb />
            <svg width="16" height="8" viewBox="0 0 16 8"><path d="M0 0h16L8 8z" fill="#a3a3a3" /></svg>
          </Scrollbar>
        </Body>
      </Wallet>
    </Screen>
  );
}
